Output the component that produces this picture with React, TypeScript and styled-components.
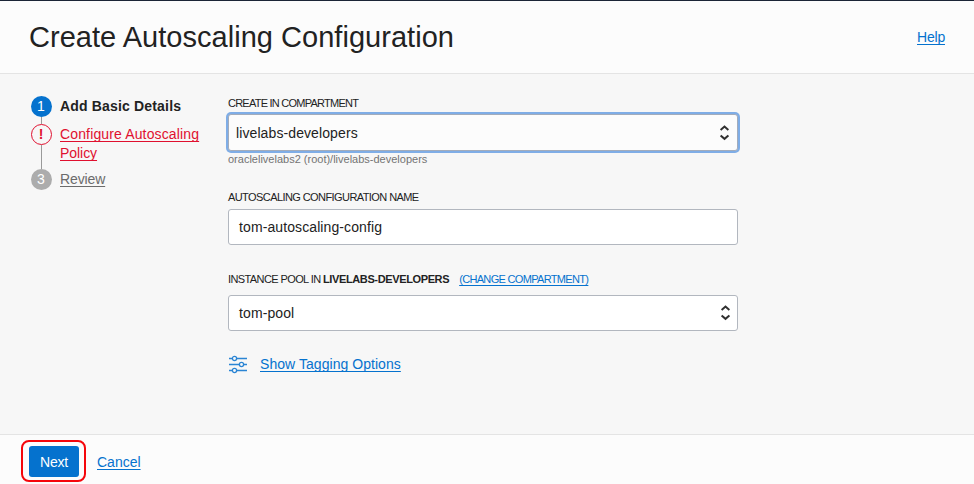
import React from "react";
import styled, { createGlobalStyle, css } from "styled-components";

const GlobalStyle = createGlobalStyle`
  * { box-sizing: border-box; }
  body {
    margin: 0;
    background: #f7f7f7;
    font-family: "Liberation Sans", Arial, sans-serif;
    font-size: 14px;
    color: #222222;
  }
`;

const Page = styled.div`
  width: 974px;
  height: 484px;
  display: flex;
  flex-direction: column;
  border-top: 1px solid #1b2536;
  overflow: hidden;
`;

const Header = styled.header`
  height: 73px;
  flex: none;
  display: flex;
  align-items: center;
  justify-content: space-between;
  padding: 0 29px;
  background: #fcfcfc;
  border-bottom: 1px solid #e4e4e4;
`;

const Title = styled.h1`
  margin: 0;
  font-size: 29px;
  line-height: 34px;
  font-weight: 400;
  letter-spacing: 0.03px;
  white-space: nowrap;
`;

const Link = styled.a<{ $color?: string; $spacing?: string }>`
  color: ${(p) => p.$color ?? "#0572ce"};
  text-decoration: underline;
  text-decoration-thickness: 1px;
  text-underline-offset: 2px;
  text-decoration-skip-ink: none;
  line-height: 17px;
  letter-spacing: ${(p) => p.$spacing ?? "normal"};
  white-space: nowrap;
  cursor: pointer;
`;

const Body = styled.main`
  flex: 1;
  display: flex;
`;

const Steps = styled.ol`
  width: 228px;
  margin: 0;
  padding: 22px 0 0 30px;
  list-style: none;
`;

const Step = styled.li<{ $height: number }>`
  display: flex;
  gap: 8px;
  height: ${(p) => p.$height}px;
`;

const Rail = styled.div`
  width: 22px;
  display: flex;
  flex-direction: column;
  align-items: center;
`;

const Connector = styled.span`
  flex: 1;
  width: 1px;
  background: #9a9a9a;
`;

type Status = "current" | "error" | "pending";

const bulletStyles = {
  current: css`
    background: #0572ce;
    color: #ffffff;
  `,
  error: css`
    border: 1px solid #e0102f;
    color: #e0102f;
    font-weight: 700;
  `,
  pending: css`
    background: #acacac;
    color: #ffffff;
  `,
};

const Bullet = styled.span<{ $status: Status }>`
  width: 21px;
  height: 21px;
  flex: none;
  border-radius: 50%;
  display: flex;
  align-items: center;
  justify-content: center;
  font-size: 14px;
  line-height: 21px;
  ${(p) => bulletStyles[p.$status]}
`;

const StepText = styled.div<{ $bold?: boolean }>`
  font-weight: ${(p) => (p.$bold ? 700 : 400)};
  letter-spacing: ${(p) => (p.$bold ? "0.17px" : "normal")};
  line-height: 19px;
  padding-top: 1px;
  white-space: nowrap;
`;

const Form = styled.form`
  width: 510px;
  padding-top: 23px;
  display: flex;
  flex-direction: column;
`;

const Field = styled.div<{ $height: number }>`
  height: ${(p) => p.$height}px;
  display: flex;
  flex-direction: column;
`;

const Label = styled.label<{ $gap: number; $spacing: string }>`
  display: flex;
  font-size: 11px;
  line-height: 13px;
  margin-bottom: ${(p) => p.$gap}px;
  letter-spacing: ${(p) => p.$spacing};
  white-space: pre;
`;

const Compartment = styled.b`
  letter-spacing: -0.37px;
`;

const LabelLink = styled(Link)`
  margin-left: 10px;
  line-height: 13px;
  height: 13px;
`;

const Control = styled.div<{ $focused?: boolean }>`
  height: 36px;
  flex: none;
  display: flex;
  align-items: center;
  justify-content: space-between;
  padding: 0 7px 0 10px;
  border: 1px solid #b2b7bf;
  border-radius: 3px;
  background: #ffffff;
  letter-spacing: 0.1px;
  ${(p) =>
    p.$focused &&
    css`
      height: 37px;
      padding: 0 8px 0 7px;
      background: #fcfcfc;
      border-color: #a3acbb;
      box-shadow: 0 0 0 2px #7fade6;
    `}
`;

const Hint = styled.div`
  margin-top: 2px;
  font-size: 11px;
  line-height: 13px;
  color: #747474;
`;

const Tagging = styled.div`
  display: flex;
  align-items: center;
  gap: 12px;
  margin-top: -1px;
`;

const Footer = styled.footer`
  height: 50px;
  flex: none;
  display: flex;
  align-items: flex-start;
  padding: 5px 0 0 21px;
  background: #fcfcfc;
  border-top: 1px solid #e4e4e4;
`;

const Highlight = styled.div`
  width: 65px;
  height: 42px;
  display: flex;
  padding: 4px 0 0 6px;
  border: 2px solid #f5060b;
  border-radius: 8px;
`;

const NextButton = styled.button`
  width: 50px;
  height: 31px;
  flex: none;
  padding: 0;
  border: 0;
  border-radius: 3px;
  background: #0572ce;
  color: #ffffff;
  font: 14px "Liberation Sans", Arial, sans-serif;
  letter-spacing: -0.2px;
`;

const CancelLink = styled(Link)`
  margin: 14px 0 0 11px;
`;

const Chevrons = () => (
  <svg width="10" height="18" viewBox="0 0 10 18" fill="none" stroke="#303030" strokeWidth="2">
    <path d="M1.6 6 5.5 2.6 9.4 6M1.6 11.4l3.9 3.4 3.9-3.4" />
  </svg>
);

const SlidersIcon = () => (
  <svg width="20" height="20" viewBox="0 0 20 20" fill="none" stroke="#2b85d4" strokeWidth="1.3">
    <path d="M1 4.5h3M9 4.5h10M1 10.5h10M16 10.5h3M1 16.5h3M9 16.5h10" />
    <circle cx="6.5" cy="4.5" r="2.1" />
    <circle cx="13.5" cy="10.5" r="2.1" />
    <circle cx="6.5" cy="16.5" r="2.1" />
  </svg>
);

export default function App() {
  return (
    <>
      <GlobalStyle />
      <Page>
        <Header>
          <Title>Create Autoscaling Configuration</Title>
          <Link $spacing="-0.2px">Help</Link>
        </Header>
        <Body>
          <Steps>
            <Step $height={28}>
              <Rail>
                <Bullet $status="current">1</Bullet>
                <Connector />
              </Rail>
              <StepText $bold>Add Basic Details</StepText>
            </Step>
            <Step $height={45}>
              <Rail>
                <Bullet $status="error">!</Bullet>
                <Connector />
              </Rail>
              <StepText>
                <Link $color="#e0102f" $spacing="0.14px">Configure Autoscaling</Link>
                <br />
                <Link $color="#e0102f" $spacing="-0.05px">Policy</Link>
              </StepText>
            </Step>
            <Step $height={22}>
              <Rail>
                <Bullet $status="pending">3</Bullet>
              </Rail>
              <StepText>
                <Link $color="#6b6b6b" $spacing="-0.12px">Review</Link>
              </StepText>
            </Step>
          </Steps>
          <Form>
            <Field $height={94}>
              <Label $gap={4} $spacing="-0.76px">CREATE IN COMPARTMENT</Label>
              <Control $focused>
                <span>livelabs-developers</span>
                <Chevrons />
              </Control>
              <Hint>oraclelivelabs2 (root)/livelabs-developers</Hint>
            </Field>
            <Field $height={82}>
              <Label $gap={5} $spacing="-0.58px">AUTOSCALING CONFIGURATION NAME</Label>
              <Control>tom-autoscaling-config</Control>
            </Field>
            <Field $height={82}>
              <Label $gap={9} $spacing="-0.6px">
                INSTANCE POOL IN <Compartment>LIVELABS-DEVELOPERS</Compartment>
                <LabelLink $spacing="-0.67px">(CHANGE COMPARTMENT)</LabelLink>
              </Label>
              <Control>
                <span>tom-pool</span>
                <Chevrons />
              </Control>
            </Field>
            <Tagging>
              <SlidersIcon />
              <Link $spacing="0.05px">Show Tagging Options</Link>
            </Tagging>
          </Form>
        </Body>
        <Footer>
          <Highlight>
            <NextButton>Next</NextButton>
          </Highlight>
          <CancelLink>Cancel</CancelLink>
        </Footer>
      </Page>
    </>
  );
}
